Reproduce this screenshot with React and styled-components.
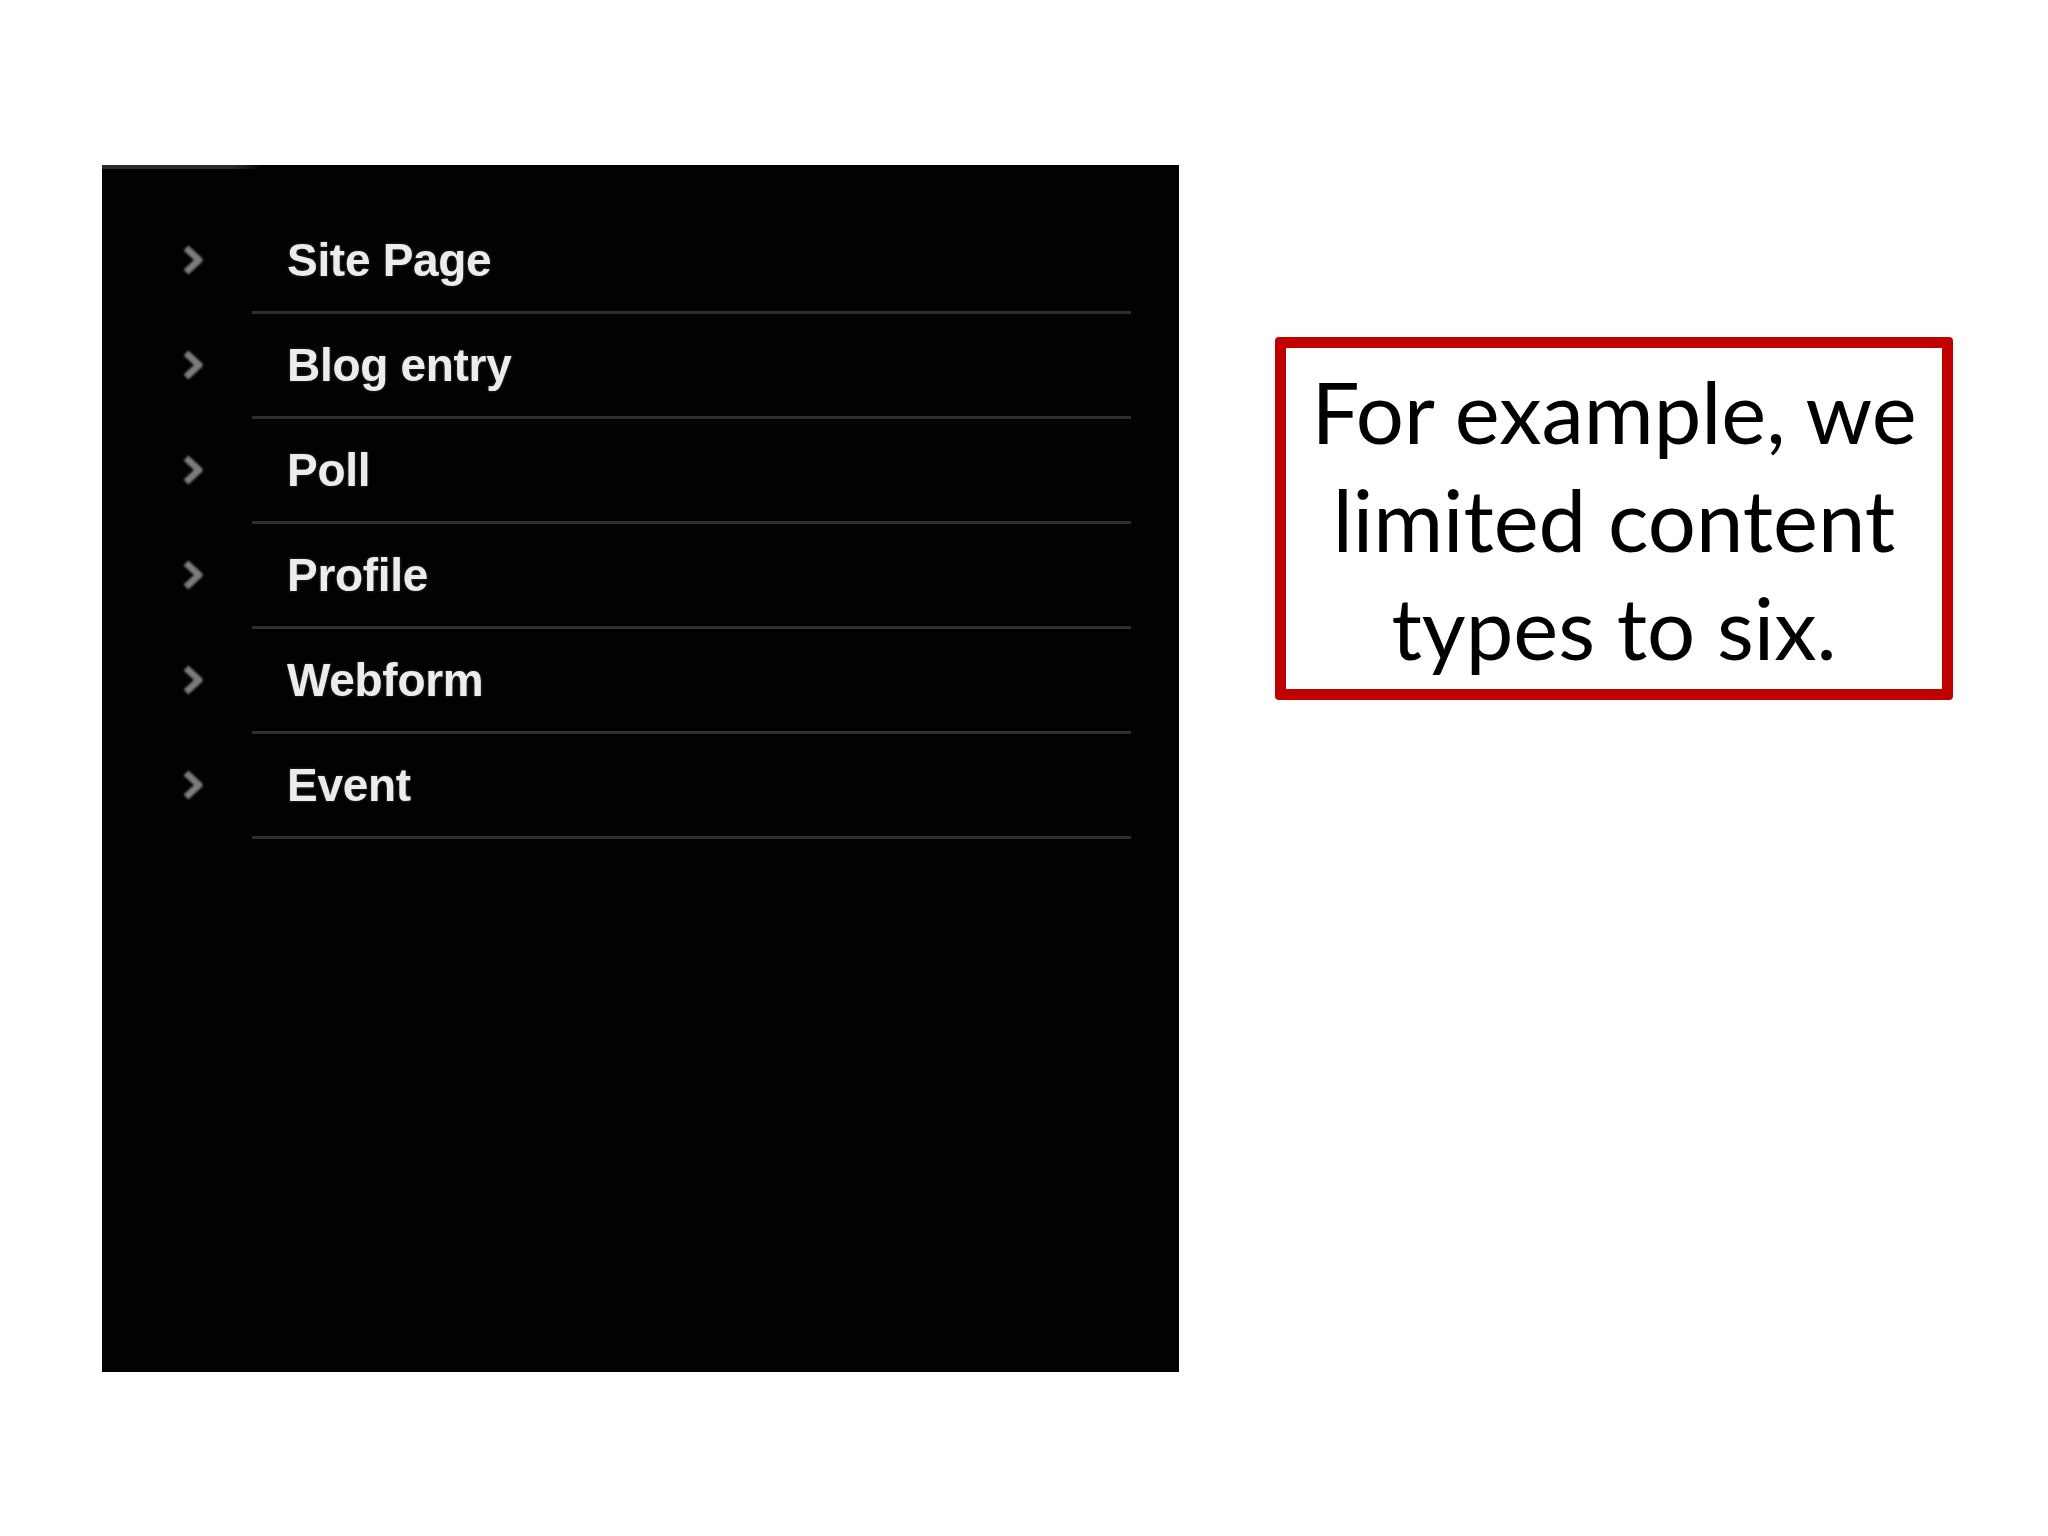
import React from 'react';
import styled, { createGlobalStyle } from 'styled-components';

const GlobalStyle = createGlobalStyle`
  html, body {
    margin: 0;
    padding: 0;
    background: #ffffff;
  }
`;

const Slide = styled.div`
  width: 2048px;
  height: 1536px;
  box-sizing: border-box;
  padding: 165px 0 0 102px;
  display: flex;
  align-items: flex-start;
  gap: 96px;
`;

const MenuPanel = styled.div`
  width: 1077px;
  height: 1207px;
  box-sizing: border-box;
  padding-top: 44px;
  background:
    linear-gradient(to right, #2c2c2c 0, #2c2c2c 130px, rgba(40, 40, 40, 0) 160px) no-repeat top left / 100% 4px,
    #020203;
`;

const MenuList = styled.ul`
  list-style: none;
  margin: 0;
  padding: 0;
`;

const MenuRow = styled.li`
  display: flex;
  align-items: stretch;
  height: 105px;
`;

const Bullet = styled.span`
  width: 150px;
  box-sizing: border-box;
  padding: 0 0 3px 79px;
  display: flex;
  align-items: center;
  filter: blur(0.8px);
`;

const RowBody = styled.div`
  flex: 0 0 879px;
  display: flex;
  align-items: center;
  padding-left: 35px;
  box-sizing: border-box;
  border-bottom: 3px solid #2e2e2f;
`;

const Label = styled.span`
  font-family: "Liberation Sans", Arial, sans-serif;
  font-weight: 700;
  font-size: 46px;
  letter-spacing: -0.3px;
  color: #ececec;
  filter: blur(0.7px);
  text-shadow: 0 0 3px rgba(255, 255, 255, 0.25);
`;

const Callout = styled.div`
  margin-top: 172px;
  width: 678px;
  height: 363px;
  box-sizing: border-box;
  border: 11px solid #c00000;
  border-radius: 4px;
  display: flex;
  align-items: center;
  justify-content: center;
`;

const CalloutText = styled.p`
  margin: 0;
  font-family: Lato, "Open Sans", sans-serif;
  font-size: 85px;
  line-height: 108px;
  color: #000000;
  text-align: center;
`;

const Chevron = () => (
  <svg width="26" height="32" viewBox="0 0 26 32">
    <path d="M5 4 L18 16 L5 28" fill="none" stroke="#7c7c7c" strokeWidth="7" strokeLinejoin="round" />
  </svg>
);

const contentTypes = ['Site Page', 'Blog entry', 'Poll', 'Profile', 'Webform', 'Event'];

const App = () => (
  <>
    <GlobalStyle />
    <Slide>
      <MenuPanel>
        <MenuList>
          {contentTypes.map((name) => (
            <MenuRow key={name}>
              <Bullet>
                <Chevron />
              </Bullet>
              <RowBody>
                <Label>{name}</Label>
              </RowBody>
            </MenuRow>
          ))}
        </MenuList>
      </MenuPanel>
      <Callout>
        <CalloutText>
          For example, we
          <br />
          limited content
          <br />
          types to six.
        </CalloutText>
      </Callout>
    </Slide>
  </>
);

export default App;
